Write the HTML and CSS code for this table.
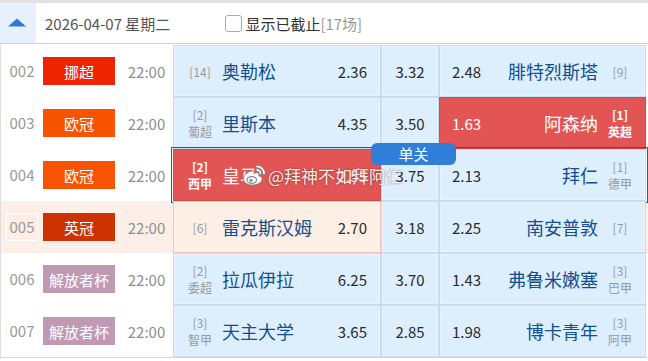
FILE: index.html
```html
<!DOCTYPE html>
<html lang="zh-CN">
<head>
<meta charset="utf-8">
<title>赛事列表</title>
<link rel="stylesheet" href="styles.css">
</head>
<body>
<div class="board">
  <div class="topbar"></div>
  <div class="head">
    <div class="toggle"><svg width="18" height="9" viewBox="0 0 18 9"><path d="M0 8.5 L9 0.5 L18 8.5 Z" fill="#2c7ad6"/></svg></div>
    <span class="date">2026-04-07 星期二</span>
    <label class="show"><span class="cb"></span>显示已截止<span class="cnt">[17场]</span></label>
  </div>

  <div class="row">
    <div class="num"><span>002</span></div>
    <div class="lg nor">挪超</div>
    <div class="time">22:00</div>
    <div class="odds">
      <div class="cell home"><div class="rk"><span>[14]</span></div><span class="name">奥勒松</span><span class="odd">2.36</span></div>
      <div class="cell draw"><span class="odd">3.32</span></div>
      <div class="cell away"><span class="odd">2.48</span><span class="name">腓特烈斯塔</span><div class="rk"><span>[9]</span></div></div>
    </div>
  </div>

  <div class="row">
    <div class="num"><span>003</span></div>
    <div class="lg ucl">欧冠</div>
    <div class="time">22:00</div>
    <div class="odds">
      <div class="cell home"><div class="rk"><span>[2]</span><span>葡超</span></div><span class="name">里斯本</span><span class="odd">4.35</span></div>
      <div class="cell draw"><span class="odd">3.50</span></div>
      <div class="cell away red"><span class="odd">1.63</span><span class="name">阿森纳</span><div class="rk"><span>[1]</span><span>英超</span></div></div>
    </div>
  </div>

  <div class="row">
    <div class="num"><span>004</span></div>
    <div class="lg ucl">欧冠</div>
    <div class="time">22:00</div>
    <div class="odds sel">
      <div class="cell home red"><div class="rk"><span>[2]</span><span>西甲</span></div><span class="name">皇马</span><span class="odd">2.55</span></div>
      <div class="cell draw"><span class="odd">3.75</span></div>
      <div class="cell away"><span class="odd">2.13</span><span class="name">拜仁</span><div class="rk"><span>[1]</span><span>德甲</span></div></div>
      <div class="single">单关</div>
    </div>
  </div>

  <div class="row hl">
    <div class="num"><span>005</span></div>
    <div class="lg cha">英冠</div>
    <div class="time">22:00</div>
    <div class="odds">
      <div class="cell home peach"><div class="rk"><span>[6]</span></div><span class="name">雷克斯汉姆</span><span class="odd">2.70</span></div>
      <div class="cell draw"><span class="odd">3.18</span></div>
      <div class="cell away"><span class="odd">2.25</span><span class="name">南安普敦</span><div class="rk"><span>[7]</span></div></div>
    </div>
  </div>

  <div class="row">
    <div class="num"><span>006</span></div>
    <div class="lg lib">解放者杯</div>
    <div class="time">22:00</div>
    <div class="odds">
      <div class="cell home"><div class="rk"><span>[2]</span><span>委超</span></div><span class="name">拉瓜伊拉</span><span class="odd">6.25</span></div>
      <div class="cell draw"><span class="odd">3.70</span></div>
      <div class="cell away"><span class="odd">1.43</span><span class="name">弗鲁米嫩塞</span><div class="rk"><span>[3]</span><span>巴甲</span></div></div>
    </div>
  </div>

  <div class="row">
    <div class="num"><span>007</span></div>
    <div class="lg lib">解放者杯</div>
    <div class="time">22:00</div>
    <div class="odds">
      <div class="cell home"><div class="rk"><span>[3]</span><span>智甲</span></div><span class="name">天主大学</span><span class="odd">3.65</span></div>
      <div class="cell draw"><span class="odd">2.85</span></div>
      <div class="cell away"><span class="odd">1.98</span><span class="name">博卡青年</span><div class="rk"><span>[3]</span><span>阿甲</span></div></div>
    </div>
  </div>

  <div class="watermark">
    <svg width="24" height="23" viewBox="0 0 24 23">
      <path d="M9.5 7 C5 8 1.2 12 1.5 15.5 C2 19.5 7 21.5 11.5 21 C17 20.5 20.5 17.5 20 14.5 C19.7 12.5 17.8 12 16.8 12.2 C17.6 10 16.5 8.5 14.5 8.8 C13 9 12 9.5 12 9.5 C12.4 7.5 11.3 6.6 9.5 7Z" fill="#fff" stroke="#8a8a8a" stroke-width="1"/>
      <ellipse cx="9.8" cy="16" rx="4.8" ry="3.4" fill="none" stroke="#8a8a8a" stroke-width="1.2"/>
      <circle cx="9" cy="16.3" r="1.6" fill="#8a8a8a"/>
      <path d="M15 2.5 A7 7 0 0 1 22 9.5" stroke="#8a8a8a" stroke-width="3.2" fill="none" stroke-linecap="round"/>
      <path d="M15 2.5 A7 7 0 0 1 22 9.5" stroke="#fff" stroke-width="1.6" fill="none" stroke-linecap="round"/>
      <path d="M15 6 A3.5 3.5 0 0 1 18.5 9.5" stroke="#8a8a8a" stroke-width="3" fill="none" stroke-linecap="round"/>
      <path d="M15 6 A3.5 3.5 0 0 1 18.5 9.5" stroke="#fff" stroke-width="1.4" fill="none" stroke-linecap="round"/>
    </svg>
    <span>@拜神不如拜阿仁</span>
  </div>
</div>
</body>
</html>
```

FILE: styles.css
```css
* { box-sizing: border-box; }

body {
  margin: 0;
  background: #fff;
  font-family: "Noto Sans CJK SC", "Noto Sans", sans-serif;
}

.board {
  position: relative;
  width: 648px;
  border-bottom: 1px solid #c4daf3;
}

.topbar {
  height: 3px;
  background: #e3e3e3;
}

.head {
  display: flex;
  align-items: center;
  height: 41px;
  border-bottom: 1px solid #bcd5f3;
  margin-bottom: 1px;
}

.toggle {
  width: 36px;
  height: 100%;
  background: #e7f1fd;
  display: flex;
  align-items: center;
  justify-content: center;
  padding-right: 3px;
  padding-bottom: 2px;
}

.date {
  margin-left: 9px;
  font-size: 15px;
  color: #555;
}

.show {
  margin-left: 55px;
  display: flex;
  align-items: center;
  font-size: 15px;
  color: #333;
}

.cb {
  width: 17px;
  height: 17px;
  border: 1px solid #a9a9a9;
  border-radius: 3px;
  background: #fff;
  margin-right: 3px;
}

.cnt { color: #999; }

.row {
  display: grid;
  grid-template-columns: 42px 72px 58px 473px;
  height: 52px;
  border-left: 1px solid #dedede;
}

.row.hl { background: #fdefe7; }

.num {
  display: flex;
  align-items: center;
  justify-content: center;
  font-size: 15px;
  color: #999;
}

.num span {
  display: block;
  line-height: 26px;
  padding: 0 3px;
  border: 1px solid transparent;
}

.row.hl .num span { border-color: #fff; }

.lg {
  align-self: center;
  height: 28px;
  display: flex;
  align-items: center;
  justify-content: center;
  color: #fff;
  font-size: 15px;
}

.nor { background: #ee2400; }
.ucl { background: #f85400; }
.cha { background: #cc3300; }
.lib { background: #c099b5; }

.time {
  display: flex;
  align-items: center;
  justify-content: center;
  padding-left: 5px;
  font-size: 15px;
  color: #8f8f8f;
}

.odds {
  position: relative;
  display: grid;
  grid-template-columns: 208px 58px 207px;
}

.sel {
  outline: 1px solid #1f5e9f;
  outline-offset: 1px;
}

.cell {
  display: flex;
  align-items: center;
  border: 1px solid #c6dcf4;
  background: #ddeefd;
  box-shadow: inset 0 0 0 1px #eaf4fe;
}

.home { padding: 0 13px 0 8px; }
.draw { justify-content: center; }
.away { padding: 0 7px 0 12px; }

.odd {
  font-size: 15px;
  color: #2b2b2b;
}

.home .odd { margin-left: auto; }

.name {
  font-size: 18px;
  color: #134e90;
}

.home .name { margin-left: 4px; }
.away .name { flex: 1; text-align: right; margin-right: 4px; }

.rk {
  width: 36px;
  display: flex;
  flex-direction: column;
  align-items: center;
  font-size: 12px;
  line-height: 17px;
  color: #999;
}

.red {
  background: #e35555;
  border-color: #d24a4a;
  box-shadow: none;
}

.red .odd, .red .name, .red .rk { color: #fff; }
.red .rk { font-weight: bold; }

.peach {
  background: #fdeee6;
  border-color: #f3c4bb;
  box-shadow: inset 0 0 0 1px #fff4ee;
}

.single {
  position: absolute;
  left: 198px;
  top: -6px;
  width: 85px;
  height: 22px;
  border-radius: 6px;
  background: #2f7fd9;
  color: #fff;
  font-size: 15px;
  line-height: 22px;
  text-align: center;
  z-index: 2;
}

.watermark {
  position: absolute;
  left: 242px;
  top: 163px;
  display: flex;
  align-items: center;
  gap: 2px;
  z-index: 3;
  font-size: 17px;
  color: rgba(255, 255, 255, 0.92);
  text-shadow: 0 0 2px rgba(0, 0, 0, 0.55);
}
```
